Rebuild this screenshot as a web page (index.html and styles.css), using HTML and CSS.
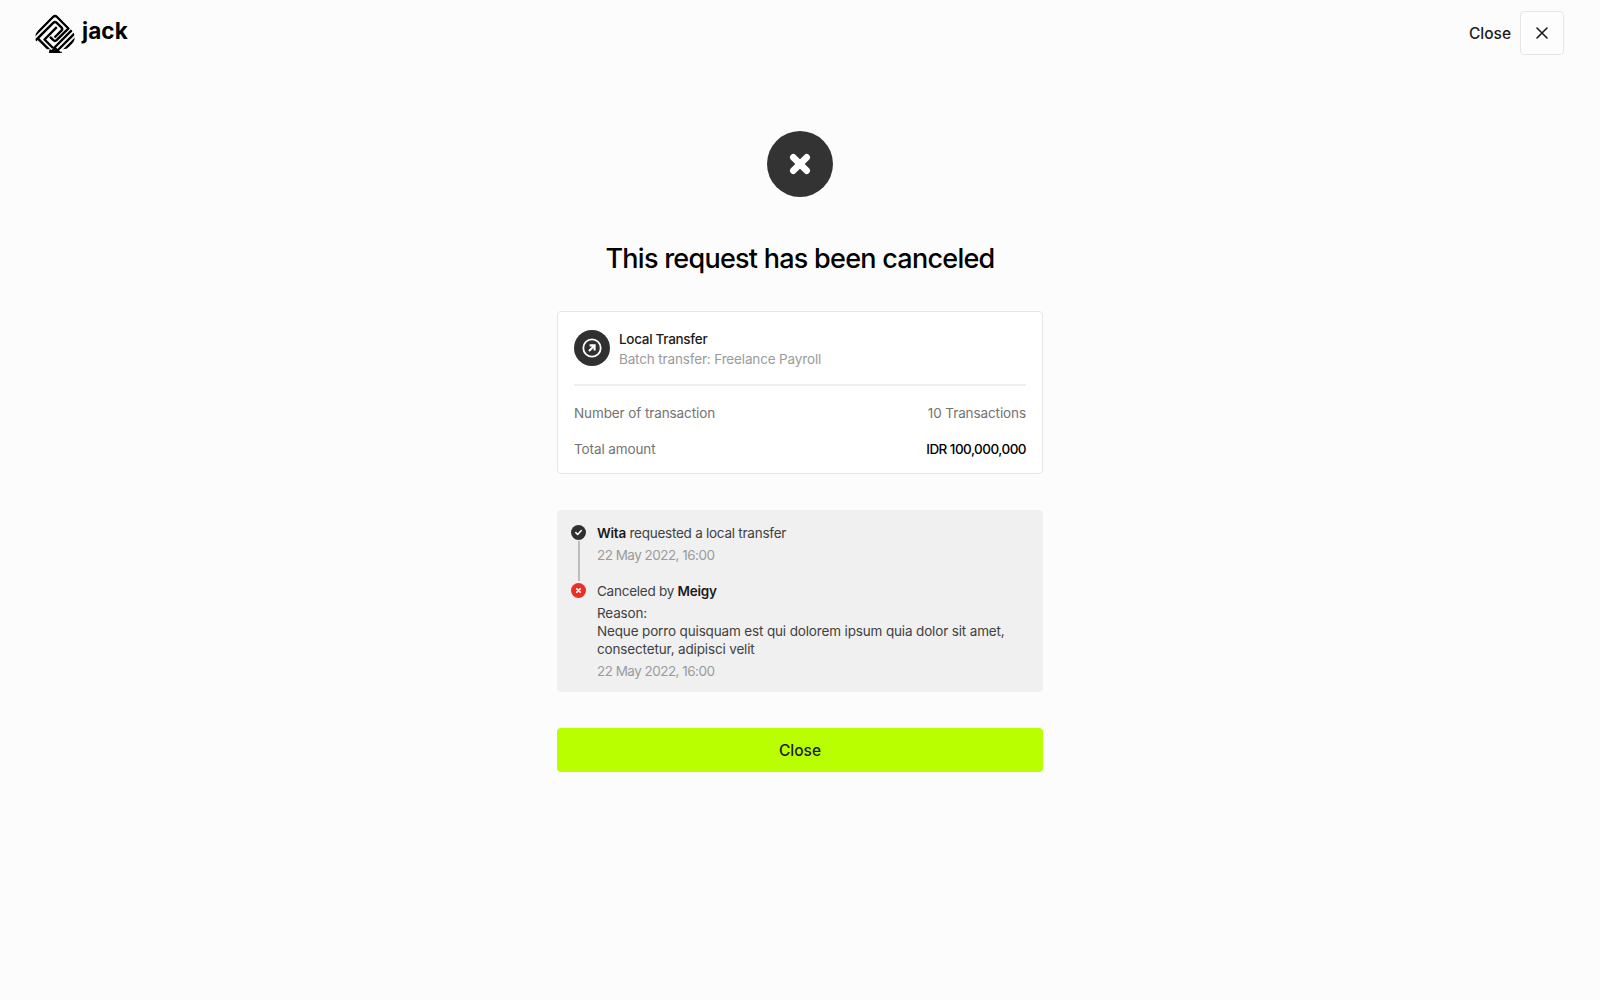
FILE: index.html
```html
<!DOCTYPE html>
<html lang="en">
<head>
    <meta charset="UTF-8">
    <meta name="viewport" content="width=device-width, initial-scale=1.0">
    <title>Jack - Request canceled</title>
    <link rel="stylesheet" href="styles.css">
</head>
<body>

    <header class="header">
        <div class="logo">
            <svg class="logo-mark" viewBox="0 0 40 40" fill="none" stroke="#000" stroke-width="2.4" stroke-linejoin="round">
                <clipPath id="spade">
                    <path d="M20 0 L37 17.5 Q41 22 39 28 Q35 38 25 36 L27 40 H13 L15 36 Q5 38 1 28 Q-1 22 3 17.5 Z"/>
                </clipPath>
                <g clip-path="url(#spade)">
                    <path d="M-1 23 L18 3.8 Q20 2 22 3.8 L33.5 15.3 L21.6 27.2 Q20 28.6 18.4 27.2 L15 23.8"/>
                    <path d="M-1 29 L18.2 9.8 Q20 8.2 21.8 9.8 L26.4 14.4 Q28 16 26.4 17.6 L19.5 24.5"/>
                    <path d="M21.8 14.2 L9.5 26.5 L18 35"/>
                    <path d="M3.2 25.8 L16 38.6"/>
                    <path d="M18.5 35.5 L42 12"/>
                    <path d="M22 38 L42 18"/>
                    <path d="M26 40 L42 24"/>
                    <path d="M20 33.5 L26.5 40 H13.5 Z" fill="#000" stroke="none"/>
                </g>
            </svg>
            <span class="logo-text">jack</span>
        </div>
        <div class="header-close">
            <span class="header-close-label">Close</span>
            <button class="close-btn" aria-label="Close">
                <svg width="12" height="12" viewBox="0 0 12 12" stroke="#1b1b1b" stroke-width="1.6" stroke-linecap="round">
                    <path d="M1 1 L11 11 M11 1 L1 11"/>
                </svg>
            </button>
        </div>
    </header>

    <main class="content">
        <svg class="status-icon" viewBox="0 0 66 66">
            <circle cx="33" cy="33" r="33" fill="#333"/>
            <path d="M26.3 26.3 L39.7 39.7 M39.7 26.3 L26.3 39.7" stroke="#fff" stroke-width="6.6" stroke-linecap="round"/>
        </svg>

        <h1 class="title">This request has been canceled</h1>

        <!-- Transfer summary -->
        <section class="card">
            <div class="card-head">
                <svg class="card-icon" viewBox="0 0 36 36" fill="none" stroke="#fff">
                    <circle cx="18" cy="18" r="18" fill="#303030" stroke="none"/>
                    <circle cx="18" cy="18" r="8.7" stroke-width="1.8"/>
                    <path d="M15 21 L20.5 15.5 M15.6 15.4 H20.6 V20.4" stroke-width="2.1"/>
                </svg>
                <div>
                    <div class="card-title">Local Transfer</div>
                    <div class="card-subtitle">Batch transfer: Freelance Payroll</div>
                </div>
            </div>
            <div class="row">
                <span>Number of transaction</span>
                <span>10 Transactions</span>
            </div>
            <div class="row">
                <span>Total amount</span>
                <span class="row-amount">IDR 100,000,000</span>
            </div>
        </section>

        <!-- Request history -->
        <section class="timeline">
            <div class="step">
                <div class="step-marker">
                    <svg width="15" height="15" viewBox="0 0 15 15" fill="none">
                        <circle cx="7.5" cy="7.5" r="7.5" fill="#303030"/>
                        <path d="M4.8 7.6 L6.7 9.5 L10.3 5.6" stroke="#fff" stroke-width="1.5" stroke-linecap="round" stroke-linejoin="round"/>
                    </svg>
                    <span class="step-line"></span>
                </div>
                <div class="step-body">
                    <p class="step-text"><b>Wita</b> requested a local transfer</p>
                    <p class="step-date">22 May 2022, 16:00</p>
                </div>
            </div>
            <div class="step">
                <div class="step-marker">
                    <svg width="15" height="15" viewBox="0 0 15 15" fill="none">
                        <circle cx="7.5" cy="7.5" r="7.5" fill="#ee2e24"/>
                        <path d="M5.8 5.8 L9.2 9.2 M9.2 5.8 L5.8 9.2" stroke="#fff" stroke-width="1.7" stroke-linecap="round"/>
                    </svg>
                </div>
                <div class="step-body">
                    <p class="step-text">Canceled by <b>Meigy</b></p>
                    <p class="step-reason">Reason:<br>Neque porro quisquam est qui dolorem ipsum quia dolor sit amet,<br>consectetur, adipisci velit</p>
                    <p class="step-date">22 May 2022, 16:00</p>
                </div>
            </div>
        </section>

        <button class="primary-btn">Close</button>
    </main>

</body>
</html>
```

FILE: styles.css
```css
* {
    box-sizing: border-box;
}

body {
    margin: 0;
    background: #fcfcfc;
    font-family: Inter, "Liberation Sans", sans-serif;
    font-size: 13.5px;
    line-height: 18px;
    color: #1b1b1b;
}

button {
    font-family: inherit;
    cursor: pointer;
}

p {
    margin: 0;
}

.header {
    display: flex;
    justify-content: space-between;
    align-items: center;
    height: 66px;
    padding: 0 36px 0 35px;
}

.logo {
    display: flex;
    align-items: center;
    gap: 7px;
}

.logo-mark {
    width: 40px;
    height: 40px;
}

.logo-text {
    font-size: 22.5px;
    font-weight: 700;
    line-height: 28px;
    letter-spacing: 0.1px;
    color: #000;
    padding-bottom: 4px;
}

.header-close {
    display: flex;
    align-items: center;
    gap: 9px;
}

.header-close-label {
    padding-top: 2px;
    font-size: 15.5px;
    font-weight: 500;
}

.close-btn {
    display: flex;
    align-items: center;
    justify-content: center;
    width: 44px;
    height: 44px;
    padding: 0;
    background: #fdfdfd;
    border: 1px solid #e6e6e6;
    border-radius: 4px;
}

.content {
    display: flex;
    flex-direction: column;
    align-items: center;
    width: 486px;
    margin: 0 auto;
    padding-top: 65px;
}

.status-icon {
    width: 66px;
    height: 66px;
}

.title {
    margin: 43px 0 33px;
    font-size: 27px;
    font-weight: 500;
    line-height: 38px;
    letter-spacing: -0.74px;
    white-space: nowrap;
    color: #000;
}

.card {
    width: 100%;
    height: 163px;
    padding: 18px 16px;
    background: #fff;
    border: 1px solid #e6e6e6;
    border-radius: 4px;
}

.card-head {
    display: flex;
    gap: 9px;
    height: 56px;
    border-bottom: 2px solid #efefef;
    line-height: 20px;
}

.card-icon {
    width: 36px;
    height: 36px;
}

.card-title {
    font-weight: 500;
    letter-spacing: -0.3px;
    margin-top: -1px;
}

.card-subtitle {
    color: #9b9b9b;
    letter-spacing: -0.15px;
}

.row {
    display: flex;
    justify-content: space-between;
    margin-top: 18px;
    color: #737373;
    letter-spacing: -0.1px;
}

.row-amount {
    font-weight: 500;
    letter-spacing: -0.54px;
    color: #000;
}

.timeline {
    width: 100%;
    height: 182px;
    margin-top: 36px;
    padding: 14px;
    background: #f0f0f0;
    border-radius: 4px;
}

.step {
    display: flex;
    gap: 11px;
}

.step:first-child {
    height: 58px;
}

.step-marker {
    display: flex;
    flex-direction: column;
    align-items: center;
    padding-top: 1px;
}

.step-line {
    width: 2px;
    height: 40px;
    margin-top: 1px;
    background: #bdbdbd;
}

.step-text b {
    font-weight: 600;
    color: #1b1b1b;
}

.step-text,
.step-reason {
    color: #414141;
    white-space: nowrap;
}

.step-text {
    letter-spacing: -0.25px;
}

.step-reason {
    margin-top: 4px;
    letter-spacing: -0.15px;
}

.step-date {
    margin-top: 4px;
    letter-spacing: -0.53px;
    color: #9b9b9b;
}

.primary-btn {
    width: 100%;
    height: 44px;
    margin-top: 36px;
    background: #b9ff00;
    border: none;
    border-radius: 4px;
    font-size: 15.5px;
    font-weight: 500;
    color: #1b1b1b;
}
```
